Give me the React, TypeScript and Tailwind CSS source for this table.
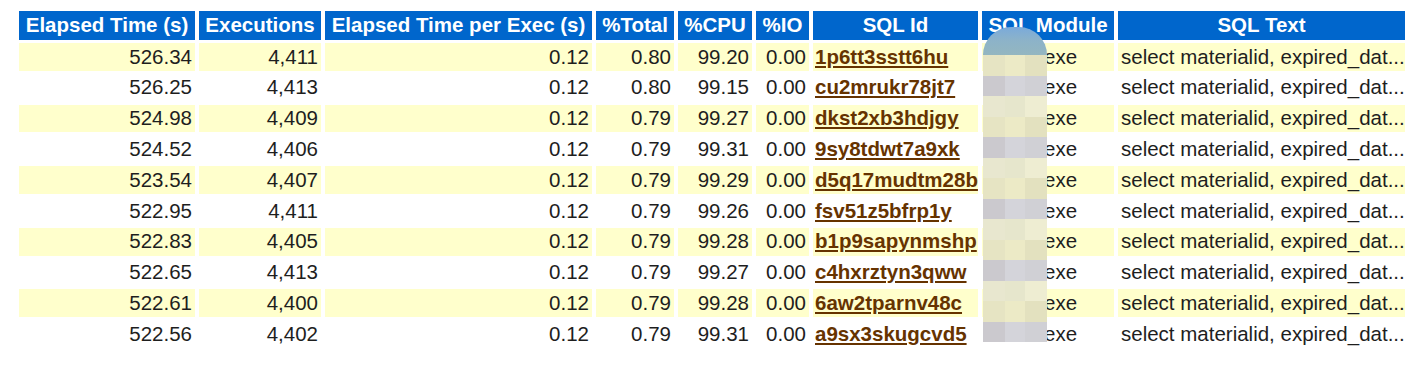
import React from "react";

const rows = [
  ["526.34", "4,411", "0.12", "0.80", "99.20", "0.00", "1p6tt3sstt6hu"],
  ["526.25", "4,413", "0.12", "0.80", "99.15", "0.00", "cu2mrukr78jt7"],
  ["524.98", "4,409", "0.12", "0.79", "99.27", "0.00", "dkst2xb3hdjgy"],
  ["524.52", "4,406", "0.12", "0.79", "99.31", "0.00", "9sy8tdwt7a9xk"],
  ["523.54", "4,407", "0.12", "0.79", "99.29", "0.00", "d5q17mudtm28b"],
  ["522.95", "4,411", "0.12", "0.79", "99.26", "0.00", "fsv51z5bfrp1y"],
  ["522.83", "4,405", "0.12", "0.79", "99.28", "0.00", "b1p9sapynmshp"],
  ["522.65", "4,413", "0.12", "0.79", "99.27", "0.00", "c4hxrztyn3qww"],
  ["522.61", "4,400", "0.12", "0.79", "99.28", "0.00", "6aw2tparnv48c"],
  ["522.56", "4,402", "0.12", "0.79", "99.31", "0.00", "a9sx3skugcvd5"],
];

const headers = [
  "Elapsed Time (s)",
  "Executions",
  "Elapsed Time per Exec (s)",
  "%Total",
  "%CPU",
  "%IO",
  "SQL Id",
  "SQL Module",
  "SQL Text",
];

const mosaicColors: Record<string, string[]> = {
  b: ["#e6e4c3", "#eceac6", "#e3e1bf"],
  g: ["#cbc9ce", "#d4d4da", "#d0d0d5"],
  l: ["#e8e7cf", "#e6e6cc", "#eeedd2"],
};
const mosaicRows = ["b", "g", "l", "b", "g", "l", "b", "g", "l", "b", "g", "l", "b", "g"];

export default function App() {
  return (
    <div
      className="relative w-[1417px] h-[373px] bg-white pt-[11px] pl-[19px] text-[#1e1e1e]"
      style={{ fontFamily: '"Liberation Sans", Arial, sans-serif' }}
    >
      <div className="grid grid-cols-[176px_122px_267px_78px_74px_53px_165px_132px_287px] gap-x-[4px] gap-y-[3px] w-max text-[20.5px] leading-none">
        {headers.map((h) => (
          <div
            key={h}
            className="h-[29px] bg-[#0066cc] text-white font-bold flex items-center justify-center whitespace-nowrap px-[2px]"
          >
            {h}
          </div>
        ))}
        {rows.map((r, i) => {
          const bg = i % 2 === 0 ? "bg-[#ffffcc]" : "bg-white";
          return (
            <React.Fragment key={r[6]}>
              {r.slice(0, 6).map((v, j) => (
                <div
                  key={j}
                  className={`${bg} h-[27.8px] flex items-center justify-end px-[3px] whitespace-nowrap`}
                >
                  {v}
                </div>
              ))}
              <div className={`${bg} h-[27.8px] flex items-center px-[2px] whitespace-nowrap`}>
                <a href="#" className="font-bold text-[#663300] underline underline-offset-[2px]">
                  {r[6]}
                </a>
              </div>
              <div className={`${bg} h-[27.8px] flex items-center pl-[62px] whitespace-nowrap`}>
                exe
              </div>
              <div className={`${bg} h-[27.8px] flex items-center px-[3px] whitespace-nowrap overflow-hidden`}>
                select materialid, expired_dat...
              </div>
            </React.Fragment>
          );
        })}
      </div>

      <div className="absolute left-[983px] top-[27px] w-[64px] flex flex-col">
        <div className="h-[28px] rounded-t-[30px] bg-linear-to-b from-[#7aaadb] via-[#8db3c8] to-[#94b6c0]" />
        {mosaicRows.map((t, i) => (
          <div key={i} className="flex h-[20.5px]">
            <div className="w-[22px]" style={{ backgroundColor: mosaicColors[t][0] }} />
            <div className="w-[20px]" style={{ backgroundColor: mosaicColors[t][1] }} />
            <div className="w-[22px]" style={{ backgroundColor: mosaicColors[t][2] }} />
          </div>
        ))}
      </div>
    </div>
  );
}
